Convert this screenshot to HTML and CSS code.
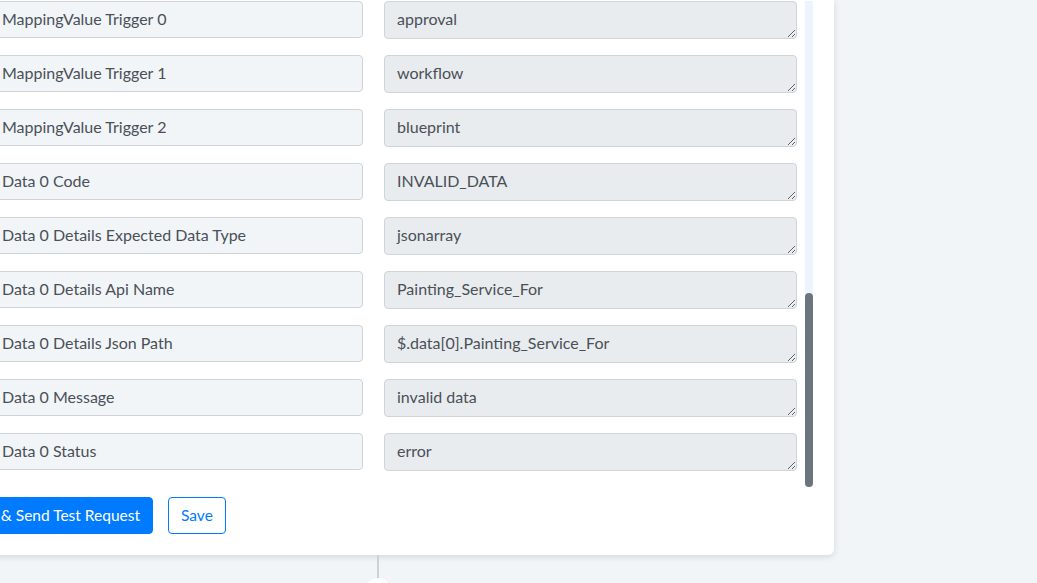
FILE: index.html
```html
<!DOCTYPE html>
<html lang="en">
<head>
  <meta charset="UTF-8">
  <title>Response Mapping</title>
  <link rel="stylesheet" href="styles.css">
</head>
<body>
  <div class="card">
    <div class="scroll-area">
      <div class="fields">
        <div class="field-row">
          <input class="field-key" type="text" value="MappingValue Trigger 0" readonly>
          <textarea class="field-value" rows="1" readonly>approval</textarea>
        </div>
        <div class="field-row">
          <input class="field-key" type="text" value="MappingValue Trigger 1" readonly>
          <textarea class="field-value" rows="1" readonly>workflow</textarea>
        </div>
        <div class="field-row">
          <input class="field-key" type="text" value="MappingValue Trigger 2" readonly>
          <textarea class="field-value" rows="1" readonly>blueprint</textarea>
        </div>
        <div class="field-row">
          <input class="field-key" type="text" value="Data 0 Code" readonly>
          <textarea class="field-value" rows="1" readonly>INVALID_DATA</textarea>
        </div>
        <div class="field-row">
          <input class="field-key" type="text" value="Data 0 Details Expected Data Type" readonly>
          <textarea class="field-value" rows="1" readonly>jsonarray</textarea>
        </div>
        <div class="field-row">
          <input class="field-key" type="text" value="Data 0 Details Api Name" readonly>
          <textarea class="field-value" rows="1" readonly>Painting_Service_For</textarea>
        </div>
        <div class="field-row">
          <input class="field-key" type="text" value="Data 0 Details Json Path" readonly>
          <textarea class="field-value" rows="1" readonly>$.data[0].Painting_Service_For</textarea>
        </div>
        <div class="field-row">
          <input class="field-key" type="text" value="Data 0 Message" readonly>
          <textarea class="field-value" rows="1" readonly>invalid data</textarea>
        </div>
        <div class="field-row">
          <input class="field-key" type="text" value="Data 0 Status" readonly>
          <textarea class="field-value" rows="1" readonly>error</textarea>
        </div>
      </div>
      <div class="scroll-track">
        <div class="scroll-thumb"></div>
      </div>
    </div>

    <div class="actions">
      <button class="btn btn-primary">Save &amp; Send Test Request</button>
      <button class="btn btn-outline">Save</button>
    </div>
  </div>

  <!-- link to the next step -->
  <div class="connector"></div>
  <div class="connector-dot"></div>
</body>
</html>
```

FILE: styles.css
```css
body {
  margin: 0;
  background: #f2f5f8;
  font-family: 'Lato', sans-serif;
  overflow: hidden;
}

.card {
  width: 858px;
  margin-left: -60px;
  padding: 1px 21px 21px 15px;
  background: #fff;
  border-radius: 0 0 6px 6px;
  box-shadow: 0 2px 6px rgba(0, 0, 0, 0.12);
}

.scroll-area {
  display: flex;
  gap: 8px;
}

.fields {
  flex: 1;
  padding: 0 0 16px 34px;
  display: flex;
  flex-direction: column;
  gap: 16px;
}

.field-row {
  display: flex;
  gap: 21px;
  align-items: flex-start;
}

.field-key,
.field-value {
  box-sizing: border-box;
  font-family: 'Lato', sans-serif;
  font-size: 16px;
  color: #495057;
  border: 1px solid #ced4da;
  border-radius: 4px;
  padding: 0 12px;
  outline: none;
}

.field-key {
  width: 374px;
  height: 37px;
  padding-bottom: 3px;
  background: #f2f5f8;
}

.field-value {
  width: 413px;
  height: 38px;
  padding-top: 7px;
  background: #e9ecef;
  line-height: 20px;
  resize: vertical;
  overflow: hidden;
}

.scroll-track {
  flex-shrink: 0;
  width: 8px;
  background: #eef4fd;
  display: flex;
  flex-direction: column;
  justify-content: flex-end;
}

.scroll-thumb {
  height: 194px;
  background: #6c757d;
  border-radius: 4px;
}

.actions {
  display: flex;
  gap: 15px;
  margin: 10px 0 0 -3px;
}

.btn {
  height: 37px;
  padding: 0 12px 2px;
  font-family: 'Lato', sans-serif;
  font-size: 15.5px;
  border-radius: 4px;
  cursor: pointer;
}

.btn-primary {
  background: #007bff;
  border: 1px solid #007bff;
  color: #fff;
}

.btn-outline {
  background: #fff;
  border: 1px solid #007bff;
  color: #007bff;
}

.connector {
  width: 2px;
  height: 23px;
  margin-left: 377px;
  background: #cdd1d8;
}

.connector-dot {
  width: 26px;
  height: 26px;
  margin-left: 365px;
  border-radius: 50%;
  background: #fff;
}
```
